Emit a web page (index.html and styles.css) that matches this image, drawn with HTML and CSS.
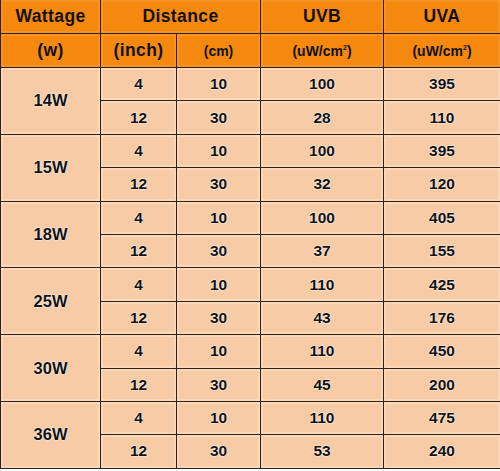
FILE: index.html
```html
<!DOCTYPE html>
<html lang="en">
<head>
<meta charset="UTF-8">
<title>UV Lamp Output</title>
<link rel="stylesheet" href="styles.css">
</head>
<body>
<table class="uv-table">
    <colgroup>
        <col class="c-watt">
        <col class="c-inch">
        <col class="c-cm">
        <col class="c-uvb">
        <col class="c-uva">
    </colgroup>
    <thead>
        <tr class="head-top">
            <th>Wattage</th>
            <th colspan="2">Distance</th>
            <th>UVB</th>
            <th>UVA</th>
        </tr>
        <tr class="head-units">
            <th>(w)</th>
            <th>(inch)</th>
            <th class="small">(cm)</th>
            <th class="small">(uW/cm<sup>2</sup>)</th>
            <th class="small">(uW/cm<sup>2</sup>)</th>
        </tr>
    </thead>
    <tbody>
        <tr><td rowspan="2" class="watt">14W</td><td>4</td><td>10</td><td>100</td><td>395</td></tr>
        <tr><td>12</td><td>30</td><td>28</td><td>110</td></tr>
        <tr><td rowspan="2" class="watt">15W</td><td>4</td><td>10</td><td>100</td><td>395</td></tr>
        <tr><td>12</td><td>30</td><td>32</td><td>120</td></tr>
        <tr><td rowspan="2" class="watt">18W</td><td>4</td><td>10</td><td>100</td><td>405</td></tr>
        <tr><td>12</td><td>30</td><td>37</td><td>155</td></tr>
        <tr><td rowspan="2" class="watt">25W</td><td>4</td><td>10</td><td>110</td><td>425</td></tr>
        <tr><td>12</td><td>30</td><td>43</td><td>176</td></tr>
        <tr><td rowspan="2" class="watt">30W</td><td>4</td><td>10</td><td>110</td><td>450</td></tr>
        <tr><td>12</td><td>30</td><td>45</td><td>200</td></tr>
        <tr><td rowspan="2" class="watt">36W</td><td>4</td><td>10</td><td>110</td><td>475</td></tr>
        <tr><td>12</td><td>30</td><td>53</td><td>240</td></tr>
    </tbody>
</table>
</body>
</html>
```

FILE: styles.css
```css
body {
    margin: 0;
    padding: 0;
    background-color: #fff;
    font-family: "Liberation Sans", Arial, sans-serif;
}
.uv-table {
    width: 500px;
    border-collapse: collapse;
    table-layout: fixed;
    color: #111;
}
.c-watt { width: 100px; }
.c-inch { width: 76px; }
.c-cm { width: 84px; }
.c-uvb { width: 123px; }
.c-uva { width: 117px; }

.uv-table th,
.uv-table td {
    border: 1px solid #2e2116;
    padding: 0;
    text-align: center;
    font-weight: bold;
}
/* header rows */
.uv-table th {
    background-color: #f5890f;
    height: 33px;
    font-size: 17.5px;
    letter-spacing: 0.4px;
    box-shadow: inset 0 0 0 2px #f79223;
}
.uv-table thead tr:first-child th {
    border-top: none;
}
.uv-table th:last-child,
.uv-table td:last-child {
    border-right: 1px solid #f6d5b8;
}
.uv-table th.small {
    font-size: 14px;
    letter-spacing: 0;
}
.uv-table sup {
    font-size: 7px;
    vertical-align: 6px;
    line-height: 0;
}
/* data rows */
.uv-table td {
    background-color: #f7cba5;
    height: 32.4px;
    font-size: 15.5px;
    text-shadow: 0 0 2px #fff, 0 0 1px #fff;
    box-shadow: inset 0 0 0 2px #f9d7b8;
}
.uv-table td.watt {
    font-size: 16.5px;
}
```
